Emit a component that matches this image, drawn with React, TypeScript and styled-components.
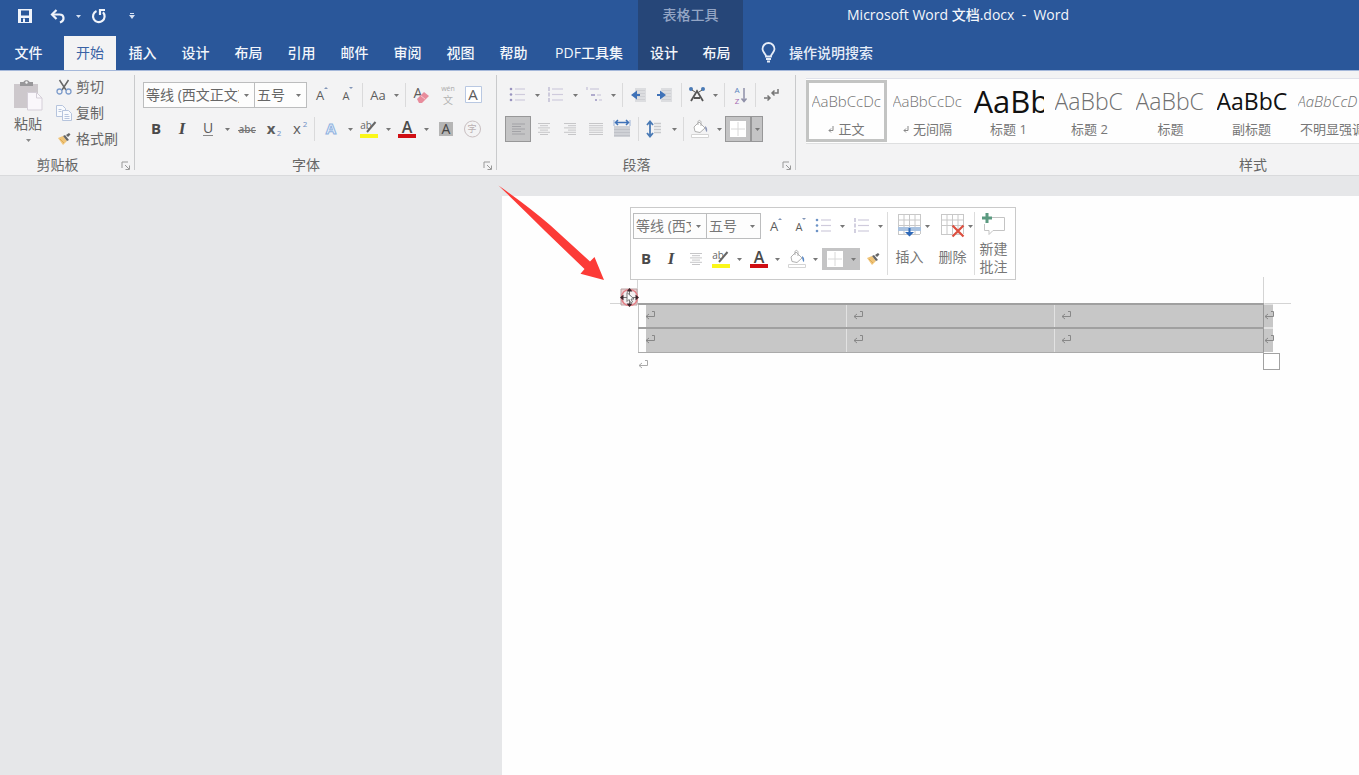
import React from "react";
import styled, { createGlobalStyle, css } from "styled-components";

const UI_FONT = `"Open Sans", "Noto Sans CJK SC", sans-serif`;

const GlobalStyle = createGlobalStyle`
  *, *::before, *::after { box-sizing: border-box; }
  html, body, #root { height: 100%; }
  body {
    margin: 0;
    font-family: ${UI_FONT};
    font-size: 14px;
    line-height: 20px;
    color: #666;
    background: #e6e7e9;
    overflow: hidden;
  }
  button, select, input { font: inherit; color: inherit; }
  button { padding: 0; border: 0; background: none; cursor: pointer; }
  svg { display: block; flex: none; }
`;

const Shell = styled.div`
  display: flex;
  flex-direction: column;
  min-height: 100%;
`;

/* ---------- header ---------- */

const Header = styled.header`
  display: flex;
  height: 71px;
  color: #f3f6fb;
  background: #2a579a;
  border-bottom: 1px solid #a5b8da;
  white-space: nowrap;
`;

const HeaderMain = styled.div`
  display: flex;
  flex-direction: column;
  flex: none;
`;

const HeaderRest = styled.div`
  flex: 1;
  min-width: 0;
`;

const QuickAccess = styled.div`
  display: flex;
  align-items: center;
  height: 36px;
  padding: 0 0 4px 8px;
`;

const QuickButton = styled.button<{ $w: number }>`
  display: flex;
  align-items: center;
  justify-content: center;
  width: ${(p) => p.$w}px;
  height: 20px;
`;

const Tabs = styled.nav`
  display: flex;
  height: 34px;
`;

const Tab = styled.button<{ $w?: number; $active?: boolean }>`
  width: ${(p) => p.$w ?? 53}px;
  height: 34px;
  font-weight: 500;
  ${(p) =>
    p.$active &&
    css`
      color: #3a62a5;
      font-weight: 400;
      background: #f3f3f4;
    `}
`;

const FileTab = styled(Tab)`
  padding-right: 7px;
`;

const ContextTabs = styled.div`
  flex: none;
  background: #264678;
`;

const ContextTitle = styled.div`
  height: 36px;
  line-height: 30px;
  text-align: center;
  font-weight: 500;
  color: #93a5c5;
`;

const DocTitle = styled.h1`
  margin: 0;
  height: 36px;
  padding-left: 104px;
  font-size: 14px;
  font-weight: 500;
  line-height: 30px;
  white-space: pre;
`;

const TellMe = styled.label`
  display: flex;
  align-items: center;
  gap: 11px;
  height: 34px;
  padding-left: 16px;
`;

const TellMeInput = styled.input`
  width: 160px;
  border: 0;
  padding: 0;
  background: none;
  outline: none;
  font-weight: 500;
  &::placeholder {
    color: #e6edf8;
    opacity: 1;
  }
`;

/* ---------- ribbon ---------- */

const Ribbon = styled.section`
  display: flex;
  height: 105px;
  background: #f3f3f4;
  border-bottom: 1px solid #d9dadc;
  overflow: hidden;
`;

const Group = styled.div<{ $w: number }>`
  position: relative;
  display: flex;
  flex-direction: column;
  flex: none;
  width: ${(p) => p.$w}px;
  padding: 11px 8px 0;
  &::after {
    content: "";
    position: absolute;
    right: 0;
    top: 4px;
    bottom: 5px;
    width: 1px;
    background: #c9cacc;
  }
`;

const GroupFooter = styled.div<{ $launcher?: boolean }>`
  margin-top: auto;
  height: 20px;
  padding-right: ${(p) => (p.$launcher ? 20 : 0)}px;
  line-height: 20px;
  text-align: center;
  white-space: nowrap;
`;

const Launcher = styled.button`
  position: absolute;
  right: 4px;
  bottom: 4px;
  width: 10px;
  height: 10px;
`;

const ToolRow = styled.div<{ $second?: boolean }>`
  display: flex;
  align-items: center;
  height: 26px;
  margin-top: ${(p) => (p.$second ? 8 : 0)}px;
`;

const Tool = styled.button<{ $w?: number; $on?: boolean }>`
  display: flex;
  align-items: center;
  justify-content: center;
  flex: none;
  width: ${(p) => p.$w ?? 26}px;
  height: 26px;
  ${(p) =>
    p.$on &&
    css`
      background: #c4c4c5;
      border: 1px solid #979798;
    `}
`;

const CaretTool = styled(Tool)``;

const Divider = styled.span`
  flex: none;
  width: 1px;
  height: 24px;
  margin: 0 3px;
  background: #dadadb;
`;

const ComboBox = styled.span<{ $w: number }>`
  position: relative;
  flex: none;
  width: ${(p) => p.$w}px;
  height: 26px;
  border: 1px solid #bcbdbe;
  background: #fdfdfd;
  & + & {
    margin-left: -1px;
  }
  & > svg {
    position: absolute;
    right: 5px;
    top: 11px;
    pointer-events: none;
  }
`;

const ComboSelect = styled.select`
  appearance: none;
  width: 100%;
  height: 24px;
  padding: 0 15px 0 2px;
  border: 0;
  background: none;
  outline: none;
`;

const ClipboardBody = styled.div`
  display: flex;
  gap: 8px;
  margin-top: -8px;
`;

const PasteButton = styled.button`
  display: flex;
  flex-direction: column;
  align-items: center;
  width: 40px;
  padding-top: 6px;
  & > svg + span {
    margin-top: 3px;
  }
  & > span + svg {
    margin-top: 5px;
  }
`;

const ClipList = styled.div`
  display: flex;
  flex-direction: column;
`;

const ClipButton = styled.button`
  display: flex;
  align-items: center;
  gap: 4px;
  height: 26px;
  white-space: nowrap;
`;

/* ---------- styles gallery ---------- */

const Gallery = styled.div`
  display: flex;
  margin: -4px 0 0 2px;
  height: 66px;
  padding-top: 1px;
  background: #fefefe;
  border-top: 1px solid #e0e2ea;
  border-bottom: 1px solid #dedfe0;
`;

const StyleCard = styled.button<{ $on?: boolean }>`
  display: flex;
  flex-direction: column;
  align-items: center;
  flex: none;
  width: 81px;
  height: 62px;
  border: 3px solid ${(p) => (p.$on ? "#c3c4c3" : "transparent")};
`;

const Preview = styled.span<{ $size: number; $weight?: number; $dark?: boolean; $italic?: boolean }>`
  width: 70px;
  height: 36px;
  overflow: hidden;
  text-align: left;
  white-space: nowrap;
  font-size: ${(p) => p.$size}px;
  font-weight: ${(p) => p.$weight ?? 300};
  font-style: ${(p) => (p.$italic ? "italic" : "normal")};
  line-height: 36px;
  color: ${(p) => (p.$dark ? "#111" : "#707070")};
`;

const StyleName = styled.span`
  display: flex;
  align-items: center;
  gap: 4px;
  font-size: 13px;
  line-height: 20px;
  color: #777;
  white-space: nowrap;
`;

/* ---------- document ---------- */

const Workspace = styled.main`
  flex: 1;
  padding: 20px 0 0 502px;
`;

const Page = styled.div`
  position: relative;
  height: 100%;
  min-height: 579px;
  padding: 107px 0 0 136px;
  background: #fefefe;
`;

const DocTable = styled.table`
  table-layout: fixed;
  width: 634px;
  border-collapse: collapse;
`;

const Cell = styled.td`
  height: 24px;
  padding: 0 0 2px 6px;
  background: #c7c7c7;
  border-top: 2px solid #a0a0a0;
  border-bottom: 2px solid #a0a0a0;
  border-left: 1px solid #e2e2e2;
  &:first-child {
    border-left-color: #c4c4c4;
    box-shadow: inset 7px 0 0 #fefefe;
  }
  tr:last-child & {
    border-bottom: 1px solid #aaa;
  }
`;

const RowEnd = styled.td`
  padding: 0 0 2px;
  background: #c7c7c7;
  border-left: 1px solid #999;
  border-top: 2px solid #e2e2e2;
`;

const TrailingMark = styled.div`
  padding-top: 6px;
`;

const Guides = styled.svg`
  position: absolute;
  left: 108px;
  top: 80px;
  pointer-events: none;
`;

const MoveHandle = styled.button`
  position: absolute;
  left: 117px;
  top: 91px;
  width: 20px;
  height: 20px;
`;

const ResizeHandle = styled.span`
  position: absolute;
  left: 761px;
  top: 157px;
  width: 17px;
  height: 17px;
  background: #fff;
  border: 1px solid #a2a2a2;
`;

const Pointer = styled.svg`
  position: absolute;
  left: -4px;
  top: -11px;
  pointer-events: none;
`;

/* ---------- floating toolbar ---------- */

const MiniBar = styled.div`
  position: absolute;
  left: 128px;
  top: 11px;
  display: flex;
  height: 73px;
  padding-right: 3px;
  color: #777;
  background: #fff;
  border: 1px solid #cacaca;
`;

const MiniTools = styled.div`
  width: 256px;
  padding: 5px 0 0 2px;
`;

const MiniRow = styled(ToolRow)`
  margin-bottom: 7px;
`;

const MiniFill = styled.span`
  display: flex;
  align-items: center;
  height: 22px;
  background: #c4c4c5;
`;

const MiniDivider = styled.span`
  width: 1px;
  margin: 4px 0;
  background: #dcdcdc;
`;

const MiniBig = styled.button<{ $w: number }>`
  display: flex;
  flex-direction: column;
  align-items: center;
  width: ${(p) => p.$w}px;
  padding-top: 5px;
  line-height: 18px;
`;

const BigIcon = styled.span`
  position: relative;
  height: 26px;
  & > svg + svg {
    position: absolute;
    left: 28px;
    top: 12px;
  }
`;

const MiniCaption = styled.span<{ $low?: boolean }>`
  margin-top: ${(p) => (p.$low ? 9 : 1)}px;
`;

/* ---------- glyphs ---------- */

const Caret = ({ c = "#777" }: { c?: string }) => (
  <svg width="5" height="3" viewBox="0 0 5 3"><path d="M0 0h5L2.5 3z" fill={c} /></svg>
);

type LetterProps = { size: number; color?: string; weight?: number; italic?: boolean; x?: number; y?: number; children: React.ReactNode };
const Letter = ({ size, color = "#5c5c5c", weight = 400, italic, x = 11, y = 16, children }: LetterProps) => (
  <text x={x} y={y} fontSize={size} fill={color} fontWeight={weight} fontStyle={italic ? "italic" : "normal"} textAnchor="middle" fontFamily={UI_FONT}>{children}</text>
);
const Ico = ({ children, s = 22 }: { children: React.ReactNode; s?: number }) => (
  <svg width={s} height={s} viewBox="0 0 22 22" fill="none">{children}</svg>
);

const LauncherIcon = () => (
  <svg width="10" height="10" viewBox="0 0 10 10" fill="none" stroke="#999"><path d="M1 7V1h6M4 4l4 4M8.500 4.500v4h-4" /></svg>
);
const SaveIcon = () => (
  <svg width="14" height="14" viewBox="0 0 14 14"><path fillRule="evenodd" fill="#f0f4fb" d="M0 0h14v14H0zM3 1.500v5h8v-5zM3 9v4h2V9.500h2V13h4V9z" /></svg>
);
const UndoIcon = () => (
  <svg width="16" height="15" viewBox="0 0 16 15" fill="none" stroke="#f0f4fb" strokeWidth="2.200"><path d="M2 5.500h7.500c5 0 5.500 6 .5 8" /><path d="M6.500 1L2 5.500 6.500 10" /></svg>
);
const RedoIcon = () => (
  <svg width="16" height="16" viewBox="0 0 16 16" fill="none" stroke="#f0f4fb" strokeWidth="2.200"><path d="M5.500 3A5.800 5.800 0 1 0 12 4.300" /><path d="M9 7V2h5" /></svg>
);
const CustomizeIcon = () => (
  <svg width="6" height="6" viewBox="0 0 6 6" fill="#d5e0f2"><path d="M1 0h4v1H1zM0 2h6L3 6z" /></svg>
);
const BulbIcon = () => (
  <svg width="19" height="22" viewBox="0 0 19 22" fill="none" stroke="#e6edf8" strokeWidth="1.800"><path d="M7 14.500c0-3-3.500-4-3.500-7.500a6 6 0 0 1 12 0c0 3.500-3.500 4.500-3.500 7.500z" /><path d="M7 17h5M8 19.500h3" /></svg>
);
const PasteIcon = () => (
  <svg width="30" height="31" viewBox="0 0 30 31"><path fill="#cdc8cc" d="M1 4h24v24H1z" /><path fill="#98979a" d="M7 2h3.500c.5-2.500 5.500-2.500 6 0H20v4H7z" /><circle cx="13.500" cy="2.500" r="1.200" fill="#f3f3f4" /><path fill="#faf7fb" stroke="#d5cfd8" d="M14.500 12.500h9l5.500 5.500v12H14.500z" /><path fill="none" stroke="#d5cfd8" d="M23.500 12.500V18H29" /></svg>
);
const CutIcon = () => (
  <svg width="16" height="16" viewBox="0 0 16 16" fill="none"><path stroke="#666" strokeWidth="1.500" d="M3.500 1l6.500 10M12.500 1L6 11" /><circle cx="3.500" cy="12.500" r="2.500" stroke="#7d9ccb" strokeWidth="1.300" /><circle cx="12.500" cy="12.500" r="2.500" stroke="#7d9ccb" strokeWidth="1.300" /></svg>
);
const CopyIcon = () => (
  <svg width="16" height="16" viewBox="0 0 16 16" fill="#f8fafd" stroke="#b6c4dd"><path d="M.5.5h6l3 3v8h-9z" /><path d="M6.500 5.500h6l3 3v7h-9z" /><path d="M2.500 4.500h3M2.500 6.500h3M8.500 9.500h4M8.500 11.500h5M8.500 13.500h5" /></svg>
);
const PainterIcon = () => (
  <svg width="16" height="14" viewBox="0 0 16 14"><path fill="#f0c478" d="M2 6l5-2 4 5-4 4z" /><path stroke="#dcab58" d="M4 7l4 4" /><path fill="#666" d="M7 4l2-1 4 5-2 1zM10 3l3-2 1.500 1.500L12 5z" /></svg>
);
const GrowIcon = () => <Ico><Letter size={13} y={16}>A</Letter><path d="M15 5l2-2 2 2z" fill="#8296b8" /></Ico>;
const ShrinkIcon = () => <Ico><Letter size={11} y={16}>A</Letter><path d="M14 3h4l-2 2z" fill="#8296b8" /></Ico>;
const EraserIcon = () => <Ico><Letter size={14} x={7} y={14}>A</Letter><path d="M6 15l7-7 5 4-7 7h-3z" fill="#e88c9c" /><path d="M9.500 11.500l5 4" stroke="#f6c6ce" /></Ico>;
const PhoneticIcon = () => <Ico><Letter size={7} color="#aaa" y={7}>wén</Letter><Letter size={10} color="#b3b3b3" y={20}>文</Letter></Ico>;
const BoxedAIcon = () => <Ico><path d="M2.500 2.500h16v16h-16z" fill="#fff" stroke="#b9c8e2" /><Letter size={15} x={10} y={16}>A</Letter></Ico>;
const BoldIcon = () => <Ico><Letter size={15} weight={700} color="#4a4a4a">B</Letter></Ico>;
const ItalicIcon = () => (
  <Ico><text x="11" y="16" fontSize="17" fill="#4a4a4a" fontWeight="700" fontStyle="italic" textAnchor="middle" fontFamily="Liberation Serif">I</text></Ico>
);
const UnderlineIcon = () => <Ico><Letter size={14} y={15}>U</Letter><path d="M6 17.500h10" stroke="#888" /></Ico>;
const StrikeIcon = () => <Ico><Letter size={10} x={12} y={15} weight={600} color="#777">abc</Letter><path d="M3 12.500h18" stroke="#777" /></Ico>;
const SubIcon = () => <Ico><Letter size={15} x={10} weight={700}>x</Letter><Letter size={8} x={18} y={18} color="#6f8fc4">2</Letter></Ico>;
const SupIcon = () => <Ico><Letter size={15} x={10}>x</Letter><Letter size={8} x={18} y={9} color="#6f8fc4">2</Letter></Ico>;
const EffectIcon = () => (
  <Ico><text x="11" y="16" fontSize="15" fill="#e9f1fb" stroke="#8fb2e0" fontWeight="700" textAnchor="middle" fontFamily={UI_FONT}>A</text></Ico>
);
const HighlightIcon = () => (
  <Ico><Letter size={10} x={8} y={11} color="#666">ab</Letter><path d="M17.500 4L9 14" stroke="#666" strokeWidth="2" /><path d="M2 16h18v4H2z" fill="#fbf719" /></Ico>
);
const FontColorIcon = () => <Ico><Letter size={16} x={11} y={15} weight={600} color="#4a4a4a">A</Letter><path d="M2 16h18v4H2z" fill="#d00f14" /></Ico>;
const ShadeAIcon = () => <Ico><path d="M5 4h14v14H5z" fill="#b5b5b5" /><Letter size={14} x={12} y={16} color="#444">A</Letter></Ico>;
const CircleCharIcon = () => <Ico><circle cx="12.500" cy="11" r="8" stroke="#c8bec0" /><Letter size={9} x={12} y={14} color="#b9afb1">字</Letter></Ico>;

const BulletsIcon = ({ dot = "#9a94c0" }: { dot?: string }) => (
  <Ico>{[5, 10.5, 16].map((y) => <g key={y}><circle cx="4" cy={y} r="1.300" fill={dot} /><path d={`M8 ${y}h10`} stroke="#cfcbdc" strokeWidth="1.200" /></g>)}</Ico>
);
const NumbersIcon = () => (
  <Ico>{[5, 10.5, 16].map((y) => <g key={y}><path d={`M4 ${y - 2}v4`} stroke="#b5b1cc" strokeWidth="1.200" /><path d={`M7 ${y}h11`} stroke="#cfcbdc" strokeWidth="1.200" /></g>)}</Ico>
);
const MultiIcon = () => (
  <Ico><path d="M4 3v3M7 5h9M14 11h4M16 16h3" stroke="#c3bfd6" strokeWidth="1.200" /><path d="M8 11h4M12 16h2" stroke="#9a94c0" strokeWidth="1.600" /></Ico>
);
const Lines = ({ x }: { x: (i: number) => [number, number] }) => (
  <Ico>{[0, 1, 2, 3, 4, 5].map((i) => <path key={i} d={`M${x(i)[0]} ${5.5 + i * 2.2}H${x(i)[1]}`} stroke="#c6c6c8" />)}</Ico>
);
const AlignLeftIcon = () => (
  <Ico>{[0, 1, 2, 3, 4].map((i) => <path key={i} d={`M5 ${6 + i * 2.5}H${i % 2 ? 14 : 18}`} stroke="#a2a2a6" />)}</Ico>
);
const AlignCenterIcon = () => <Lines x={(i) => (i % 2 ? [7, 15] : [5, 17])} />;
const AlignRightIcon = () => <Lines x={(i) => (i % 2 ? [9, 17] : [5, 17])} />;
const JustifyIcon = () => <Lines x={() => [4, 18]} />;
const IndentIcon = ({ right }: { right?: boolean }) => (
  <Ico><path d="M7 4h11v14H7z" fill="#dcdde0" /><path d="M8 6.500h9M8 9.500h9M8 12.500h9M8 15.500h9" stroke="#cfd0d4" /><path d={right ? "M3 10h3V6.500l6 4.500-6 4.500V12H3z" : "M12 10H9V6.500L3 11l6 4.500V12h3z"} fill="#3f72b8" /></Ico>
);
const DistributeIcon = () => (
  <Ico><path d="M3 8h16v11H3z" fill="#cfd1d6" /><path d="M3 11.500h16M3 14.500h16M3 17.500h16" stroke="#c0c2c8" /><path d="M3 2v6M19 2v6" stroke="#9db3d6" /><path d="M4 4.500h14M7 2L4.500 4.500 7 7M15 2l2.500 2.500L15 7" stroke="#3f72b8" strokeWidth="1.500" /></Ico>
);
const SpacingIcon = () => (
  <Ico><path d="M10 5.500h7M10 8.500h7M10 11.500h7M10 14.500h7" stroke="#c8c9cc" strokeWidth="1.500" /><path d="M6 4v14M3 7l3-3.500L9 7M3 15l3 3.500L9 15" stroke="#4a7ab5" strokeWidth="1.800" /></Ico>
);
const BucketIcon = ({ blue }: { blue?: boolean }) => (
  <Ico><path d="M5 9l5-5 6 6-5 4.500-5-1z" fill="#fff" stroke="#b0b0b0" /><path d="M9 7V3.500c1-2 3-1 3 1V8" stroke="#b0b0b0" /><path d="M16 8c2 1 2.500 3 2 6-1-.5-2-2-2-6z" fill={blue ? "#5b8ac6" : "#8f99b8"} /><path d="M2.500 16.500h17v3h-17z" fill="#fff" stroke="#d4d4d4" /></Ico>
);
const BordersIcon = () => (
  <Ico><path d="M3 3h16v16H3z" fill="#fff" /><path d="M11 4v14M4 11h14" stroke="#d8d8d8" /></Ico>
);
const AsianIcon = () => (
  <Ico><path d="M5 17l6-10 6 10M8 14h6" stroke="#555" strokeWidth="1.800" /><circle cx="5" cy="5" r="2" fill="#4a7ab5" /><circle cx="17" cy="5" r="2" fill="#4a7ab5" /><path d="M6 6l3 2M16 6l-3 2" stroke="#555" /></Ico>
);
const SortIcon = () => (
  <Ico><Letter size={8} x={8} y={9} color="#5b83bf">A</Letter><Letter size={8} x={8} y={20} color="#a367b0">Z</Letter><path d="M15 4v13M12.500 14.500L15 17.500l2.500-3" stroke="#8f90a8" strokeWidth="1.500" /></Ico>
);
const MarksIcon = () => (
  <Ico><path d="M18 5v4h-6M14.500 6.500L12 9l2.500 2.500M4 14h6M7.500 11.500L10 14l-2.500 2.500" stroke="#777" strokeWidth="1.500" /></Ico>
);
const ReturnIcon = ({ c = "#888" }: { c?: string }) => (
  <svg width="12" height="11" viewBox="0 0 12 11" fill="none" stroke={c}><path d="M7 1.500h2.500v5H1M4 4L1 6.500 4 9" /></svg>
);
const SmallReturn = () => (
  <svg width="6" height="7" viewBox="0 0 6 7" fill="none" stroke="#888"><path d="M5 0v4.500H1M3 2.500L1 4.500l2 2" /></svg>
);
const GridPath = () => <path d="M1 1.500h22M1 7h22M1 12.500h22M1.500 1v20M7 1v20M12.500 1v20M18 1v20M23.500 1v20M1 21.500h22" stroke="#c8c8c8" />;
const InsertTableIcon = () => (
  <svg width="25" height="25" viewBox="0 0 25 25" fill="none"><GridPath /><path d="M1 14h23v4H1z" fill="#a9c2e0" /><path d="M11.500 15h2v4H17l-4.500 4.500L8 19h3.500z" fill="#2f69b8" /></svg>
);
const DeleteTableIcon = () => (
  <svg width="25" height="25" viewBox="0 0 25 25" fill="none"><GridPath /><path d="M12.500 12.500l11 11M23.500 12.500l-11 11" stroke="#dc4f3f" strokeWidth="2.200" /></svg>
);
const CommentIcon = () => (
  <svg width="25" height="25" viewBox="0 0 25 25" fill="none"><path d="M11 4.500h12.500v13H12l-4 4v-4H3.500V11" stroke="#c4c4c4" /><path d="M6 0v10M1 5h10" stroke="#5b9a80" strokeWidth="3" /></svg>
);
const MoveIcon = () => (
  <svg width="20" height="20" viewBox="0 0 20 20" fill="none"><path d="M2 2h16v16H2z" fill="#e9cfd0" stroke="#b9a3a4" /><circle cx="10.500" cy="10.500" r="8" fill="#f4eff0" stroke="#e27f86" strokeWidth="1.500" /><path d="M10.500 3v15M3 10.500h15" stroke="#777" /><path d="M7.500 4.500L10.500 1l3 3.500zM7.500 16.500l3 3.500 3-3.500zM4.500 7.500L1 10.500l3.500 3zM16.500 7.500l3.500 3-3.500 3z" fill="#3c2228" /><path d="M8 5.500v9l2-2 2 3.500 1.500-1-1.500-3h3z" fill="#fff" stroke="#777" /></svg>
);

/* ---------- composed controls ---------- */

const Drop = ({ label, w = 12, on }: { label: string; w?: number; on?: boolean }) => (
  <CaretTool $w={w} $on={on} aria-label={`${label} 选项`}><Caret /></CaretTool>
);

const Combo = ({ w, label, value }: { w: number; label: string; value: string }) => (
  <ComboBox $w={w}>
    <ComboSelect aria-label={label} defaultValue={value}><option value={value}>{value}</option></ComboSelect>
    <Caret />
  </ComboBox>
);

const T = ({ label, w, on, children }: { label: string; w?: number; on?: boolean; children: React.ReactNode }) => (
  <Tool aria-label={label} $w={w} $on={on}>{children}</Tool>
);

const Clipboard = () => (
  <Group $w={135}>
    <ClipboardBody>
      <PasteButton><PasteIcon /><span>粘贴</span><Caret c="#888" /></PasteButton>
      <ClipList>
        <ClipButton><CutIcon />剪切</ClipButton>
        <ClipButton><CopyIcon />复制</ClipButton>
        <ClipButton><PainterIcon />格式刷</ClipButton>
      </ClipList>
    </ClipboardBody>
    <GroupFooter $launcher>剪贴板</GroupFooter>
    <Launcher aria-label="剪贴板设置"><LauncherIcon /></Launcher>
  </Group>
);

const FontGroup = () => (
  <Group $w={362}>
    <ToolRow>
      <Combo w={112} label="字体" value="等线 (西文正文)" />
      <Combo w={53} label="字号" value="五号" />
      <T label="增大字号"><GrowIcon /></T>
      <T label="减小字号"><ShrinkIcon /></T>
      <Divider />
      <T label="更改大小写" w={24}><Ico><Letter size={13}>Aa</Letter></Ico></T>
      <Drop label="更改大小写" />
      <Divider />
      <T label="清除格式"><EraserIcon /></T>
      <T label="拼音指南"><PhoneticIcon /></T>
      <T label="字符边框"><BoxedAIcon /></T>
    </ToolRow>
    <ToolRow $second>
      <T label="加粗"><BoldIcon /></T>
      <T label="倾斜"><ItalicIcon /></T>
      <T label="下划线"><UnderlineIcon /></T>
      <Drop label="下划线" />
      <T label="删除线"><StrikeIcon /></T>
      <T label="下标"><SubIcon /></T>
      <T label="上标"><SupIcon /></T>
      <Divider />
      <T label="文本效果"><EffectIcon /></T>
      <Drop label="文本效果" />
      <T label="突出显示"><HighlightIcon /></T>
      <Drop label="突出显示" />
      <T label="字体颜色"><FontColorIcon /></T>
      <Drop label="字体颜色" />
      <T label="字符底纹"><ShadeAIcon /></T>
      <T label="带圈字符"><CircleCharIcon /></T>
    </ToolRow>
    <GroupFooter $launcher>字体</GroupFooter>
    <Launcher aria-label="字体设置"><LauncherIcon /></Launcher>
  </Group>
);

const ParagraphGroup = () => (
  <Group $w={299}>
    <ToolRow>
      <T label="项目符号"><BulletsIcon /></T>
      <Drop label="项目符号" />
      <T label="编号"><NumbersIcon /></T>
      <Drop label="编号" />
      <T label="多级列表"><MultiIcon /></T>
      <Drop label="多级列表" />
      <Divider />
      <T label="减少缩进量"><IndentIcon /></T>
      <T label="增加缩进量"><IndentIcon right /></T>
      <Divider />
      <T label="中文版式" w={24}><AsianIcon /></T>
      <Drop label="中文版式" />
      <Divider />
      <T label="排序" w={24}><SortIcon /></T>
      <Divider />
      <T label="显示编辑标记" w={24}><MarksIcon /></T>
    </ToolRow>
    <ToolRow $second>
      <T label="左对齐" on><AlignLeftIcon /></T>
      <T label="居中"><AlignCenterIcon /></T>
      <T label="右对齐"><AlignRightIcon /></T>
      <T label="两端对齐"><JustifyIcon /></T>
      <T label="分散对齐"><DistributeIcon /></T>
      <Divider />
      <T label="行距"><SpacingIcon /></T>
      <Drop label="行距" />
      <Divider />
      <T label="底纹"><BucketIcon /></T>
      <Drop label="底纹" />
      <T label="边框" on><BordersIcon /></T>
      <Drop label="边框" on />
    </ToolRow>
    <GroupFooter $launcher>段落</GroupFooter>
    <Launcher aria-label="段落设置"><LauncherIcon /></Launcher>
  </Group>
);

type StyleDef = { sample: string; name: string; size: number; weight?: number; dark?: boolean; italic?: boolean; mark?: boolean };
const STYLES: StyleDef[] = [
  { sample: "AaBbCcDc", name: "正文", size: 15, mark: true },
  { sample: "AaBbCcDc", name: "无间隔", size: 15, mark: true },
  { sample: "AaBb", name: "标题 1", size: 31, weight: 400, dark: true },
  { sample: "AaBbC", name: "标题 2", size: 23 },
  { sample: "AaBbC", name: "标题", size: 23 },
  { sample: "AaBbC", name: "副标题", size: 23, weight: 400, dark: true },
  { sample: "AaBbCcD", name: "不明显强调", size: 15, italic: true },
];

const StylesGroup = () => (
  <Group $w={914}>
    <Gallery>
      {STYLES.map((s, i) => (
        <StyleCard key={s.name} $on={i === 0}>
          <Preview $size={s.size} $weight={s.weight} $dark={s.dark} $italic={s.italic}>{s.sample}</Preview>
          <StyleName>{s.mark && <SmallReturn />}{s.name}</StyleName>
        </StyleCard>
      ))}
    </Gallery>
    <GroupFooter>样式</GroupFooter>
  </Group>
);

const FloatingToolbar = () => (
  <MiniBar>
    <MiniTools>
      <MiniRow>
        <Combo w={74} label="浮动字体" value="等线 (西文正文)" />
        <Combo w={55} label="浮动字号" value="五号" />
        <T label="增大字号" w={25}><GrowIcon /></T>
        <T label="减小字号" w={25}><ShrinkIcon /></T>
        <T label="项目符号" w={25}><BulletsIcon dot="#6d93c6" /></T>
        <Drop label="项目符号" w={13} />
        <T label="编号" w={25}><NumbersIcon /></T>
        <Drop label="编号" w={13} />
      </MiniRow>
      <MiniRow>
        <T label="加粗" w={25}><BoldIcon /></T>
        <T label="倾斜" w={25}><ItalicIcon /></T>
        <T label="居中" w={25}><AlignCenterIcon /></T>
        <T label="突出显示" w={25}><HighlightIcon /></T>
        <Drop label="突出显示" w={13} />
        <T label="字体颜色" w={25}><FontColorIcon /></T>
        <Drop label="字体颜色" w={13} />
        <T label="底纹" w={25}><BucketIcon blue /></T>
        <Drop label="底纹" w={13} />
        <MiniFill>
          <T label="边框" w={25}><BordersIcon /></T>
          <Drop label="边框" w={13} />
        </MiniFill>
        <T label="格式刷" w={25}><PainterIcon /></T>
      </MiniRow>
    </MiniTools>
    <MiniDivider />
    <MiniBig $w={43}><BigIcon><InsertTableIcon /><Caret /></BigIcon><MiniCaption $low>插入</MiniCaption></MiniBig>
    <MiniBig $w={43}><BigIcon><DeleteTableIcon /><Caret /></BigIcon><MiniCaption $low>删除</MiniCaption></MiniBig>
    <MiniDivider />
    <MiniBig $w={37}><BigIcon><CommentIcon /></BigIcon><MiniCaption>新建<br />批注</MiniCaption></MiniBig>
  </MiniBar>
);

const TABS = ["插入", "设计", "布局", "引用", "邮件", "审阅", "视图", "帮助"];

export default function App() {
  return (
    <Shell>
      <GlobalStyle />
      <Header>
        <HeaderMain>
          <QuickAccess>
            <QuickButton $w={34} aria-label="保存"><SaveIcon /></QuickButton>
            <QuickButton $w={32} aria-label="撤销"><UndoIcon /></QuickButton>
            <QuickButton $w={8} aria-label="撤销选项"><Caret c="#d5e0f2" /></QuickButton>
            <QuickButton $w={34} aria-label="重复"><RedoIcon /></QuickButton>
            <QuickButton $w={32} aria-label="自定义快速访问工具栏"><CustomizeIcon /></QuickButton>
          </QuickAccess>
          <Tabs>
            <FileTab $w={64}>文件</FileTab>
            <Tab $w={52} $active>开始</Tab>
            {TABS.map((t) => <Tab key={t}>{t}</Tab>)}
            <Tab $w={98}>PDF工具集</Tab>
          </Tabs>
        </HeaderMain>
        <ContextTabs>
          <ContextTitle>表格工具</ContextTitle>
          <Tabs><Tab $w={52}>设计</Tab><Tab>布局</Tab></Tabs>
        </ContextTabs>
        <HeaderRest>
          <DocTitle>Microsoft Word 文档.docx  -  Word</DocTitle>
          <TellMe><BulbIcon /><TellMeInput aria-label="操作说明搜索" placeholder="操作说明搜索" /></TellMe>
        </HeaderRest>
      </Header>
      <Ribbon>
        <Clipboard />
        <FontGroup />
        <ParagraphGroup />
        <StylesGroup />
      </Ribbon>
      <Workspace>
        <Page>
          <DocTable>
            <colgroup><col width="208" /><col width="208" /><col width="209" /><col width="9" /></colgroup>
            <tbody>
              {[0, 1].map((r) => (
                <tr key={r}>
                  <Cell><ReturnIcon /></Cell>
                  <Cell><ReturnIcon /></Cell>
                  <Cell><ReturnIcon /></Cell>
                  <RowEnd><ReturnIcon /></RowEnd>
                </tr>
              ))}
            </tbody>
          </DocTable>
          <TrailingMark><ReturnIcon c="#aaa" /></TrailingMark>
          <Guides width="682" height="30" fill="none" stroke="#d4d4d4">
            <path d="M0 27.500H28M655 27.500H681M27.500 0V27M653.500 1V27" />
          </Guides>
          <MoveHandle aria-label="移动表格"><MoveIcon /></MoveHandle>
          <ResizeHandle />
          <FloatingToolbar />
          <Pointer width="108" height="98" viewBox="498 185 108 98">
            <path d="M498.500 185.500Q528 206 550 225L590 261.500 594.500 257 604 280 580.500 273.700 584.500 269 545 231Q523 209 498.500 185.500z" fill="#fc3b37" />
          </Pointer>
        </Page>
      </Workspace>
    </Shell>
  );
}
